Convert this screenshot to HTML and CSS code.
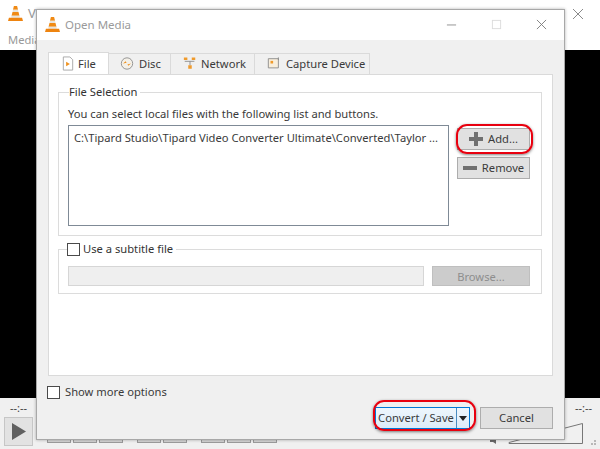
FILE: index.html
```html
<!DOCTYPE html>
<html lang="en">
<head>
<meta charset="utf-8">
<title>Open Media</title>
<link rel="stylesheet" href="styles.css">
</head>
<body>
<div class="app">
  <header class="app-top">
    <div class="app-title">
      <svg class="cone" viewBox="0 0 16 18"><path d="M6.300 1h3.400l1 4H5.300zM4.800 7.500h6.400l1 4H3.800z" fill="#f08a14"/><path d="M5.300 5h5.400l.5 2.500H4.800zM3.800 11.500h8.400l.5 2H3.300z" fill="#e8e4dc"/><path d="M1 13.500h14l1 3.500H0z" fill="#ee8410"/></svg>
      <span>V</span>
      <svg class="app-close" viewBox="0 0 12 12"><path d="M1 1l10 10M11 1L1 11" stroke="#8a8a8a" fill="none"/></svg>
    </div>
    <div class="app-menu">Media</div>
  </header>
  <main class="video"></main>
  <footer class="controls">
    <div class="times"><span>--:--</span><span>--:--</span></div>
    <div class="control-row">
      <button class="play" aria-label="Play"><svg viewBox="0 0 14 17"><path d="M0 0l14 8.500L0 17z" fill="#606060"/></svg></button>
      <div class="mini-group first"><i></i><i></i><i></i></div>
      <div class="mini-group"><i></i><i></i></div>
      <div class="mini-group"><i></i><i></i><i></i></div>
      <svg class="volume" viewBox="0 0 106 23"><path d="M0 16h3l3-3v9l-3-2H0z" fill="#6a6a6a"/><path d="M5 14l2-2v3z" fill="#ee8a14"/><path d="M19 20.500L92.500 1.500v20H19z" fill="none" stroke="#777"/><path d="M101 21h2v2h-2zM104 18h2v2h-2zM104 21h2v2h-2z" fill="#b8b8b8"/></svg>
    </div>
  </footer>
</div>

<section class="dialog">
  <div class="titlebar">
    <svg class="cone" viewBox="0 0 16 18"><path d="M6.300 1h3.400l1 4H5.300zM4.800 7.500h6.400l1 4H3.800z" fill="#f08a14"/><path d="M5.300 5h5.400l.5 2.500H4.800zM3.800 11.500h8.400l.5 2H3.300z" fill="#e8e4dc"/><path d="M1 13.500h14l1 3.500H0z" fill="#ee8410"/></svg>
    <span class="dialog-title">Open Media</span>
    <div class="window-buttons">
      <svg viewBox="0 0 12 12"><path d="M1 6.500h10" stroke="#8c8c8c" fill="none"/></svg>
      <svg viewBox="0 0 12 12"><rect x="1.500" y="1.500" width="9" height="9" stroke="#dcdcdc" fill="none"/></svg>
      <svg viewBox="0 0 12 12"><path d="M1 1l10 10M11 1L1 11" stroke="#7c7c7c" fill="none"/></svg>
    </div>
  </div>
  <div class="dialog-body">
    <nav class="tabs">
      <div class="tab active">
        <svg viewBox="0 0 14 16"><path d="M2 1h7l3 3v11H2z" fill="#fff" stroke="#a8a8a8"/><path d="M5 6l4 2.500L5 11z" fill="#f0921e"/></svg>File
      </div>
      <div class="tab">
        <svg viewBox="0 0 16 16"><circle cx="8" cy="8" r="6.500" fill="#f4f0e8" stroke="#8a8a8a"/><path d="M3.500 8l3-2.500 1 1.500zM12.500 8l-3 2.500-1-1.500z" fill="#ee8f1b"/></svg>Disc
      </div>
      <div class="tab">
        <svg viewBox="0 0 16 16"><path d="M1 1h4v3H1zM10 1h4v3h-4zM6 10h4v4H6z" fill="#ef9a2c"/><path d="M2 5.500h11M8 5.500V10" stroke="#888" fill="none"/></svg>Network
      </div>
      <div class="tab">
        <svg viewBox="0 0 16 16"><path d="M1.500 2.500h11.500v10.500H1.500z" fill="#f8eedc" stroke="#888"/><path d="M4 5h3v3H4z" fill="#f09a2a"/><path d="M13 1v3" stroke="#888" fill="none"/></svg>Capture Device
      </div>
    </nav>
    <div class="pane">
      <fieldset class="group file-group">
        <legend>File Selection</legend>
        <p class="hint">You can select local files with the following list and buttons.</p>
        <div class="file-row">
          <div class="listbox">C:\Tipard Studio\Tipard Video Converter Ultimate\Converted\Taylor ...</div>
          <div class="side-buttons">
            <button class="btn add-btn"><svg viewBox="0 0 14 14"><path d="M5 0h4v5h5v4H9v5H5V9H0V5h5z" fill="#707070"/></svg>Add...</button>
            <button class="btn"><svg class="minus" viewBox="0 0 14 4"><path d="M0 0h14v4H0z" fill="#707070"/></svg>Remove</button>
          </div>
        </div>
      </fieldset>
      <fieldset class="group subtitle-group">
        <legend><span class="check"></span>Use a subtitle file</legend>
        <div class="subtitle-row">
          <div class="sub-input"></div>
          <button class="btn-disabled">Browse...</button>
        </div>
      </fieldset>
    </div>
    <label class="more"><span class="check"></span>Show more options</label>
    <div class="actions">
      <div class="convert">
        <span class="convert-label">Convert / Save</span>
        <span class="convert-arrow"><svg viewBox="0 0 8 5"><path d="M0 0h8L4 5z" fill="#222"/></svg></span>
      </div>
      <button class="btn cancel">Cancel</button>
    </div>
  </div>
</section>
<div class="mark mark-add"></div>
<div class="mark mark-convert"></div>
</body>
</html>
```
FILE: styles.css
```css
* { box-sizing: border-box; }
html, body { margin: 0; padding: 0; }
body {
  width: 600px;
  height: 449px;
  overflow: hidden;
  position: relative;
  font-family: "Noto Sans", "Open Sans", sans-serif;
  font-size: 11.200px;
  color: #3a3a3a;
  background: #f0f0f0;
}
button { font: inherit; color: inherit; }

.app { display: flex; flex-direction: column; height: 449px; }
.app-top { height: 50px; background: #fff; }
.app-title { display: flex; align-items: center; height: 30px; padding: 0 0 4px 8px; gap: 5px; color: #999; font-size: 13px; position: relative; }
.app-title .cone { width: 15px; height: 17px; }
.app-close { position: absolute; left: 572px; top: 8px; width: 12px; height: 12px; }
.app-menu { padding: 0 0 0 8px; color: #999; line-height: 20px; }
.video { height: 348px; background: #000; }
.controls { flex: 1; background: #f0f0f0; padding: 2px 4px 0; }
.times { display: flex; justify-content: space-between; padding: 0 4px 0 6px; height: 18px; line-height: 16px; font-size: 11px; color: #444; }
.control-row { display: flex; align-items: flex-end; height: 28px; }
.play { width: 29px; height: 29px; padding: 0; display: flex; align-items: center; justify-content: center; background: #e2e2e2; border: 1px solid #c6c6c6; }
.play svg { width: 14px; height: 17px; }
.mini-group { display: flex; gap: 2px; margin-left: 14px; margin-bottom: 3px; }
.mini-group.first { margin-left: 14px; }
.mini-group i { width: 24px; height: 6px; background: #d4d4d4; border: 1px solid #9c9c9c; }
.volume { margin-left: auto; width: 106px; height: 23px; margin-bottom: 1px; flex: none; }

.dialog {
  position: absolute;
  left: 36px;
  top: 9px;
  width: 529px;
  height: 431px;
  display: flex;
  flex-direction: column;
  background: #f0f0f0;
  border: 1px solid #a8a8a8;
  box-shadow: 0 0 3px rgba(0, 0, 0, .3);
}
.titlebar { height: 30px; flex: none; background: #fff; display: flex; align-items: center; padding: 0 0 2px 8px; }
.titlebar .cone { width: 15px; height: 17px; }
.dialog-title { margin-left: 5px; font-size: 11.500px; color: #9a9a9a; }
.window-buttons { margin-left: auto; display: flex; align-items: center; gap: 34px; padding-right: 17px; }
.window-buttons svg { width: 11px; height: 11px; }

.dialog-body { flex: 1; display: flex; flex-direction: column; padding: 13px 11px 0; }
.tabs { display: flex; height: 21px; flex: none; position: relative; z-index: 1; }
.tab { display: flex; align-items: center; height: 21px; padding-bottom: 1px; background: #f0f0f0; border: 1px solid #dadada; border-bottom: 0; border-left: 0; white-space: nowrap; }
.tab svg { width: 14px; height: 15px; }
.tab:nth-child(1) { width: 61px; padding-left: 12px; gap: 3px; height: 22px; background: #fff; margin-top: -1px; border-left: 1px solid #dadada; }
.tab:nth-child(2) { width: 62px; padding-left: 11px; gap: 5px; }
.tab:nth-child(3) { width: 84px; padding-left: 12px; gap: 4px; }
.tab:nth-child(4) { width: 115px; padding-left: 12px; gap: 5px; }

.pane { height: 302px; flex: none; background: #fff; border: 1px solid #dadada; padding: 11px 10px 0 9px; display: flex; flex-direction: column; }
.group { margin: 0; border: 1px solid #dcdcdc; min-width: 0; }
.group legend { padding: 0 3px 0 0; line-height: 16px; color: #333; }
.file-group { height: 152px; padding: 0 9px; margin-top: -2px; }
.file-group legend { margin-left: 1px; }
.hint { margin: 6px 0 3px; line-height: 16px; white-space: nowrap; }
.file-row { display: flex; gap: 8px; }
.listbox { width: 381px; height: 101px; border: 1px solid #7f8a96; padding: 4px 5px; line-height: 16px; white-space: nowrap; overflow: hidden; }
.side-buttons { display: flex; flex-direction: column; gap: 7px; }
.btn { display: flex; align-items: center; justify-content: center; gap: 5px; padding: 0; background: #e1e1e1; border: 1px solid #adadad; line-height: 1; }
.side-buttons .btn { width: 73px; height: 22px; }
.btn svg { width: 14px; height: 14px; }
.btn svg.minus { height: 4px; }
.add-btn { margin-top: 3px; }

.subtitle-group { height: 53px; margin-top: 5px; padding: 0 10px 0 9px; }
.subtitle-group legend { display: flex; align-items: center; gap: 3px; padding: 0 3px 0 0; margin-left: -1px; }
.check { display: inline-block; flex: none; width: 13px; height: 13px; background: #fff; border: 1px solid #4a4a4a; }
.subtitle-row { display: flex; gap: 8px; margin-top: 9px; }
.sub-input { width: 356px; height: 20px; background: #efefef; border: 1px solid #d6d6d6; }
.btn-disabled { width: 98px; height: 20px; padding: 0; background: #cccccc; border: 1px solid #bfbfbf; color: #8e8e8e; }

.more { display: flex; align-items: center; gap: 5px; height: 14px; margin: 9px 0 0 -1px; line-height: 14px; }
.actions { display: flex; justify-content: flex-end; gap: 10px; margin-top: 8px; }
.convert { display: flex; width: 95px; height: 22px; background: linear-gradient(#eef6fc, #dcecf9); border: 1px solid #0078d7; }
.convert-label { flex: 1; text-align: center; line-height: 20px; white-space: nowrap; }
.convert-arrow { width: 13px; display: flex; align-items: center; justify-content: center; border-left: 1px solid #4a8cc0; }
.convert-arrow svg { width: 8px; height: 5px; }
.btn.cancel { width: 73px; height: 22px; }

.mark { position: absolute; border: 2.500px solid #e8000f; box-shadow: 0 1px 3px rgba(0, 0, 0, .5); pointer-events: none; }
.mark-add { left: 456px; top: 124px; width: 77px; height: 30px; border-radius: 11px; }
.mark-convert { left: 373px; top: 400px; width: 103px; height: 31px; border-radius: 11px; }
```
